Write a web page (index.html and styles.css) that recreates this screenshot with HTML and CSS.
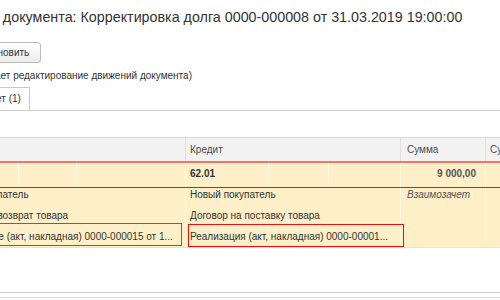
FILE: index.html
```html
<!DOCTYPE html>
<html lang="ru">
<head>
    <meta charset="UTF-8">
    <title>Движения документа</title>
    <link rel="stylesheet" href="styles.css">
</head>
<body>

    <div class="title">Движения документа: Корректировка долга 0000-000008 от 31.03.2019 19:00:00</div>

    <div class="toolbar">
        <button class="btn">Обновить</button>
    </div>

    <div class="note">Ручная корректировка (разрешает редактирование движений документа)</div>

    <div class="tabs">
        <div class="tab">Бухгалтерский и налоговый учет (1)</div>
    </div>

    <div class="table-area">
        <div class="grid">
            <div class="head">
                <div class="hcell">Дебет</div>
                <div class="hcell">Кредит</div>
                <div class="hcell sum">Сумма</div>
                <div class="hcell">Сумма Дт</div>
            </div>

            <div class="row">
                <div class="col">
                    <div class="line first">
                        <span class="sub dt-acc"></span>
                        <span class="sub dt-q"></span>
                        <span class="sub dt-v"></span>
                    </div>
                    <div class="line">Новый покупатель</div>
                    <div class="line">Договор на возврат товара</div>
                    <div class="line">Поступление (акт, накладная) 0000-000015 от 1...</div>
                </div>
                <div class="col">
                    <div class="line first">
                        <span class="sub kt-acc"><b>62.01</b></span>
                        <span class="sub kt-q"></span>
                        <span class="sub kt-v"></span>
                    </div>
                    <div class="line">Новый покупатель</div>
                    <div class="line">Договор на поставку товара</div>
                    <div class="line">Реализация (акт, накладная) 0000-00001...</div>
                </div>
                <div class="col sum">
                    <div class="line first amount"><b>9 000,00</b></div>
                    <div class="line"><i>Взаимозачет</i></div>
                    <div class="line"></div>
                    <div class="line"></div>
                </div>
                <div class="col">
                    <div class="line first"></div>
                    <div class="line"></div>
                    <div class="line"></div>
                    <div class="line"></div>
                </div>

                <div class="mark mark-line"></div>
                <div class="mark mark-dt"></div>
                <div class="mark mark-kt"></div>
            </div>
        </div>
    </div>
    <div class="bottom-line"></div>

</body>
</html>
```

FILE: styles.css
```css
body {
    margin: 0;
    font-family: "Liberation Sans", Arial, sans-serif;
    font-size: 10px;
    color: #333;
    background-color: white;
    overflow: hidden;
}
.title {
    font-size: 14.3px;
    line-height: 20px;
    margin: 7px 0 0 -67.5px;
    white-space: nowrap;
}
.toolbar {
    margin-top: 15px;
    height: 21px;
}
.btn {
    font-family: inherit;
    font-size: 10px;
    color: #333;
    height: 21px;
    margin-left: -28px;
    padding: 0 11px;
    border: 1px solid #bcbcbc;
    border-radius: 3px;
    background: linear-gradient(#ffffff, #ececec);
}
.note {
    margin: 6px 0 0 -150px;
    line-height: 14px;
    white-space: nowrap;
}
.tabs {
    margin-top: 4px;
    border-bottom: 1px solid #cfcfcf;
    height: 23px;
}
.tab {
    display: inline-block;
    margin-left: -155px;
    padding: 0 8px 0 9px;
    height: 23px;
    line-height: 22px;
    border: 1px solid #c8c8c8;
    border-bottom: none;
    background: white;
    white-space: nowrap;
    box-sizing: border-box;
}
.table-area {
    margin-top: 26px;
    height: 155px;
    border-bottom: 1px solid #cacaca;
}
.grid {
    margin-left: -62px;
    width: 640px;
}
.head, .row {
    display: grid;
    grid-template-columns: 247px 215px 85px 1fr;
}
.head {
    height: 24px;
    border-top: 1px solid #d6d6d6;
    background-color: #f2f2f2;
    box-sizing: border-box;
}
.hcell {
    line-height: 23px;
    padding-left: 4px;
    border-left: 1px solid #e0e0e0;
    color: #4d4d4d;
}
.hcell.sum {
    padding-left: 6px;
}
.row {
    position: relative;
    border-top: 2px solid #f7735f;
    border-bottom: 1px solid #efe3c0;
    background-color: #fdf0c8;
}
.col {
    border-left: 1px solid #fff8e4;
}
.line {
    height: 21px;
    line-height: 21px;
    padding-left: 4px;
    white-space: nowrap;
    overflow: hidden;
}
.col.sum .line {
    padding-left: 6px;
    color: #555;
}
.line.first {
    display: flex;
    padding-left: 0;
}
.line.amount {
    justify-content: flex-end;
    padding-right: 9px;
}
.sub {
    padding-left: 4px;
    border-right: 1px solid #fff8e4;
    box-sizing: border-box;
}
.dt-acc { width: 80px; }
.dt-q { width: 59px; }
.dt-v { width: 108px; border-right: none; }
.kt-acc { width: 83px; }
.kt-q { width: 61px; }
.kt-v { width: 71px; border-right: none; }

.mark {
    position: absolute;
    box-sizing: border-box;
}
.mark-line {
    top: 24px;
    left: 0;
    right: 0;
    height: 1px;
    background-color: #f01010;
}
.mark-dt {
    top: 60px;
    left: -10px;
    width: 254px;
    height: 23px;
    border: 1px solid #f02a2a;
}
.mark-kt {
    top: 61px;
    left: 250px;
    width: 216px;
    height: 23px;
    border: 1px solid #f01010;
}
.bottom-line {
    margin-top: 4px;
    border-top: 1px solid #dadada;
}
```
